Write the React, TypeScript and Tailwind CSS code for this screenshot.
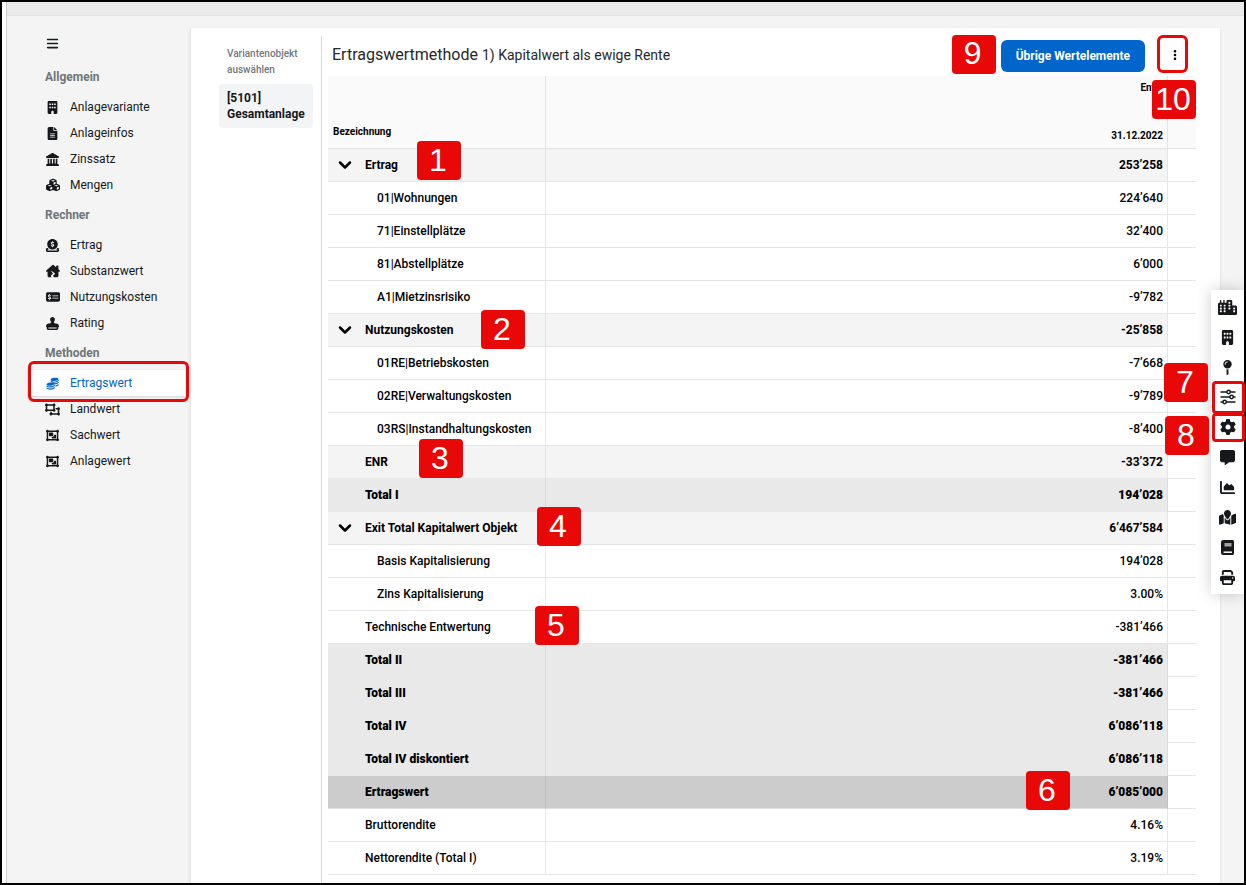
import { FaBars, FaBuilding, FaChartArea, FaCircleDollarToSlot, FaCity, FaCubes, FaEllipsisVertical, FaFileLines, FaGear, FaHouseChimneyCrack, FaLandmark, FaMapLocation, FaMapPin, FaMessage, FaMoneyCheckDollar, FaObjectGroup, FaObjectUngroup, FaPrint, FaStamp } from 'react-icons/fa6'
import { FiChevronDown } from 'react-icons/fi'
import type { ComponentType } from 'react'

type Icon = ComponentType<{ size?: number }>

interface NavItem {
  label: string
  icon: Icon
  size: number
  active?: boolean
}

interface Row {
  label: string
  value: string
  kind: 'group' | 'child' | 'sum' | 'total' | 'result' | 'plain'
  badge?: { text: string; pos: string }
}

function CoinStacksIcon({ size = 14 }: { size?: number }) {
  return (
    <svg width={size} height={size} viewBox="0 0 14 14" fill="none" stroke="currentColor" strokeWidth="1.3" strokeLinecap="round">
      <ellipse cx="9.2" cy="2.6" rx="4.3" ry="1.7" transform="rotate(-8 9.2 2.6)" fill="currentColor" stroke="none" />
      <path d="M5.6 4.9C8 5.9 11.6 5.4 13.2 3.9M8.8 7.4C10.8 7.4 12.4 6.9 13.2 6.1M10.6 9.6C11.8 9.4 12.7 9 13.2 8.4" />
      <ellipse cx="4.9" cy="7.7" rx="4.3" ry="1.7" transform="rotate(-8 4.9 7.7)" fill="currentColor" stroke="none" />
      <path d="M1 9.9C3.2 11.2 7.2 10.8 9 9.3M1 12.2C3.2 13.5 7.2 13.1 9 11.6" />
    </svg>
  )
}

function SlidersIcon({ size = 16 }: { size?: number }) {
  return (
    <svg width={size} height={size} viewBox="0 0 16 16" fill="none" stroke="currentColor" strokeWidth="1.4" strokeLinecap="round">
      <path d="M1 3H6.8M10.4 3H15M1 8H9.8M13.4 8H15M1 13H2.8M6.4 13H15" />
      <circle cx="8.6" cy="3" r="1.7" />
      <circle cx="11.6" cy="8" r="1.7" />
      <circle cx="4.6" cy="13" r="1.7" />
    </svg>
  )
}

function BookIcon({ size = 15 }: { size?: number }) {
  return (
    <svg width={size} height={size} viewBox="0 0 15 15">
      <path d="M3.5 0H12.5Q14 0 14 1.5V13.6Q14 15 12.6 15H3.5Q1 15 1 12.5V2.5Q1 0 3.5 0Z" fill="currentColor" />
      <rect x="4.5" y="3" width="7" height="3.5" fill="#a3a3a3" />
      <path d="M3.5 12.2H12" stroke="#ffffff" strokeWidth="1.5" />
    </svg>
  )
}

const sections: { title: string; items: NavItem[] }[] = [
  {
    title: 'Allgemein',
    items: [
      { label: 'Anlagevariante', icon: FaBuilding, size: 13 },
      { label: 'Anlageinfos', icon: FaFileLines, size: 13 },
      { label: 'Zinssatz', icon: FaLandmark, size: 13 },
      { label: 'Mengen', icon: FaCubes, size: 14 },
    ],
  },
  {
    title: 'Rechner',
    items: [
      { label: 'Ertrag', icon: FaCircleDollarToSlot, size: 13 },
      { label: 'Substanzwert', icon: FaHouseChimneyCrack, size: 14 },
      { label: 'Nutzungskosten', icon: FaMoneyCheckDollar, size: 14 },
      { label: 'Rating', icon: FaStamp, size: 13 },
    ],
  },
  {
    title: 'Methoden',
    items: [
      { label: 'Ertragswert', icon: CoinStacksIcon, size: 13, active: true },
      { label: 'Landwert', icon: FaObjectUngroup, size: 15 },
      { label: 'Sachwert', icon: FaObjectGroup, size: 13 },
      { label: 'Anlagewert', icon: FaObjectGroup, size: 13 },
    ],
  },
]

const rows: Row[] = [
  { label: 'Ertrag', value: '253’258', kind: 'group', badge: { text: '1', pos: 'left-[89px] -top-2' } },
  { label: '01|Wohnungen', value: '224’640', kind: 'child' },
  { label: '71|Einstellplätze', value: '32’400', kind: 'child' },
  { label: '81|Abstellplätze', value: '6’000', kind: 'child' },
  { label: 'A1|Mietzinsrisiko', value: '-9’782', kind: 'child' },
  { label: 'Nutzungskosten', value: '-25’858', kind: 'group', badge: { text: '2', pos: 'left-[153px] -top-1' } },
  { label: '01RE|Betriebskosten', value: '-7’668', kind: 'child' },
  { label: '02RE|Verwaltungskosten', value: '-9’789', kind: 'child' },
  { label: '03RS|Instandhaltungskosten', value: '-8’400', kind: 'child' },
  { label: 'ENR', value: '-33’372', kind: 'sum', badge: { text: '3', pos: 'left-[91px] -top-[7px]' } },
  { label: 'Total I', value: '194’028', kind: 'total' },
  { label: 'Exit Total Kapitalwert Objekt', value: '6’467’584', kind: 'group', badge: { text: '4', pos: 'left-[209px] -top-[5px]' } },
  { label: 'Basis Kapitalisierung', value: '194’028', kind: 'child' },
  { label: 'Zins Kapitalisierung', value: '3.00%', kind: 'child' },
  { label: 'Technische Entwertung', value: '-381’466', kind: 'plain', badge: { text: '5', pos: 'left-[207px] -top-[5px]' } },
  { label: 'Total II', value: '-381’466', kind: 'total' },
  { label: 'Total III', value: '-381’466', kind: 'total' },
  { label: 'Total IV', value: '6’086’118', kind: 'total' },
  { label: 'Total IV diskontiert', value: '6’086’118', kind: 'total' },
  { label: 'Ertragswert', value: '6’085’000', kind: 'result', badge: { text: '6', pos: 'right-[97px] -top-[5px]' } },
  { label: 'Bruttorendite', value: '4.16%', kind: 'plain' },
  { label: 'Nettorendite (Total I)', value: '3.19%', kind: 'plain' },
]

const rowStyle: Record<Row['kind'], string> = {
  group: 'bg-[#f4f4f4] border-r-[#e4e4e4] border-b-[#e6e6e6] font-bold',
  child: 'border-r-[#e8e8e8] border-b-[#e6e6e6] font-medium',
  sum: 'bg-[#f4f4f4] border-r-[#e4e4e4] border-b-[#e9e9e9] font-bold',
  total: 'bg-[#e9e9e9] border-r-[#dadada] border-b-[#e9e9e9] font-black',
  result: 'bg-[#cccccc] border-r-[#c0c0c0] border-b-[#dedede] font-black',
  plain: 'border-r-[#e8e8e8] border-b-[#e6e6e6] font-medium',
}

const tools: { label: string; icon: Icon; size: number; mark?: string; badge?: { text: string; pos: string } }[] = [
  { label: 'Areal', icon: FaCity, size: 19 },
  { label: 'Gebäude', icon: FaBuilding, size: 15 },
  { label: 'Standort', icon: FaMapPin, size: 15 },
  { label: 'Filter', icon: SlidersIcon, size: 16, mark: '-top-px -bottom-0.5', badge: { text: '7', pos: 'right-[36px] -top-[19px]' } },
  { label: 'Einstellungen', icon: FaGear, size: 16, mark: 'top-px bottom-0', badge: { text: '8', pos: 'right-[35px] top-1' } },
  { label: 'Kommentare', icon: FaMessage, size: 15 },
  { label: 'Diagramm', icon: FaChartArea, size: 15 },
  { label: 'Karte', icon: FaMapLocation, size: 17 },
  { label: 'Handbuch', icon: BookIcon, size: 15 },
  { label: 'Drucken', icon: FaPrint, size: 15 },
]

function Badge({ text, pos }: { text: string; pos: string }) {
  return (
    <span
      className={`${pos} z-20 flex h-[39px] w-11 items-center justify-center rounded bg-[#e90808] pr-0.5 pb-0.5 font-['Liberation_Sans',sans-serif] text-[32px] leading-none font-normal text-white`}
    >
      {text}
    </span>
  )
}

function Sidebar() {
  return (
    <aside className="w-[183px] shrink-0 pr-px pl-[21px]">
      <button aria-label="Menü" className="mt-[15px] ml-[18px] flex h-6 w-4 items-center">
        <FaBars size={13} />
      </button>
      <nav className="mt-[5px]">
        {sections.map((section) => (
          <div key={section.title}>
            <h2 className="flex h-[34px] items-center pl-[17px] font-bold text-[#6f747a]">{section.title}</h2>
            {section.items.map(({ label, icon: Icon, size, active }) => (
              <a
                key={label}
                href="#"
                className={`relative flex h-[26px] items-center gap-2.5 pl-[17px] ${active ? 'bg-white text-[#0066cc] shadow-sm' : ''}`}
              >
                <span className="flex w-[15px] justify-center">
                  <Icon size={size} />
                </span>
                {label}
                {active && <span className="absolute inset-x-0 -top-[9px] -bottom-1.5 rounded-md border-3 border-[#e90808]" />}
              </a>
            ))}
          </div>
        ))}
      </nav>
    </aside>
  )
}

function ValueTable() {
  return (
    <table className="w-full table-fixed border-separate border-spacing-0">
      <colgroup>
        <col className="w-[218px]" />
        <col />
        <col className="w-[28px]" />
      </colgroup>
      <thead>
        <tr className="h-[73px] bg-[#fafafa] text-[10px] leading-4 font-black">
          <th className="border-r border-b border-[#e4e4e4] px-[5px] pb-2 text-left align-bottom">Bezeichnung</th>
          <th className="border-r border-b border-[#e4e4e4] px-1 pt-1 pb-1 text-right align-top">
            <div className="flex h-16 flex-col justify-between">
              <span className="pr-2">Ent</span>
              <span>31.12.2022</span>
            </div>
          </th>
          <th className="relative border-b border-[#e4e4e4]">
            <Badge text="10" pos="absolute right-0 top-1" />
          </th>
        </tr>
      </thead>
      <tbody>
        {rows.map(({ label, value, kind, badge }) => (
          <tr key={label} className="h-[33px]">
            <td className={`relative border-r border-b whitespace-nowrap ${rowStyle[kind]} ${kind === 'child' ? 'pl-[49px]' : kind === 'group' ? 'pl-[7px]' : 'pl-[37px]'}`}>
              {kind === 'group' ? (
                <button className="flex items-center gap-2.5" aria-expanded="true">
                  <FiChevronDown size={20} strokeWidth={3} />
                  {label}
                </button>
              ) : (
                label
              )}
              {badge && kind !== 'result' && <Badge text={badge.text} pos={`absolute ${badge.pos}`} />}
            </td>
            <td className={`relative border-r border-b pr-1 text-right ${rowStyle[kind]}`}>
              {value}
              {badge && kind === 'result' && <Badge text={badge.text} pos={`absolute ${badge.pos}`} />}
            </td>
            <td className="border-b border-[#e6e6e6]" />
          </tr>
        ))}
      </tbody>
    </table>
  )
}

function ToolRail() {
  return (
    <div className="absolute top-[288px] right-0 flex w-[33px] flex-col bg-white py-0.5 shadow-[0_0_16px_rgba(0,0,0,0.2)]">
      {tools.map(({ label, icon: Icon, size, mark, badge }) => (
        <div key={label} className="relative">
          <button aria-label={label} className="flex h-[30px] w-full items-center justify-center">
            <Icon size={size} />
          </button>
          {mark && <span className={`pointer-events-none absolute left-px -right-px rounded border-3 border-[#e90808] ${mark}`} />}
          {badge && <Badge text={badge.text} pos={`absolute ${badge.pos}`} />}
        </div>
      ))}
    </div>
  )
}

export default function App() {
  return (
    <div className="relative min-h-screen border-2 border-black bg-white pl-1 font-[Roboto,sans-serif] text-xs text-[#16181b]">
      <div className="flex min-h-[calc(100vh-4px)] flex-col border-l border-[#cfcfcf] bg-[#f4f4f4]">
        <div className="h-3.5 border-b border-[#e2e2e2] bg-[#ebebeb]" />
        <div className="flex grow">
          <Sidebar />
          <main className="mt-3 mr-6 flex min-w-0 grow border-l border-[#e6e6e6] bg-white text-black shadow-sm">
            <div className="mt-2 flex w-[131px] shrink-0 flex-col border-r border-[#d9d9d9] pt-2.5 pr-2 pl-7">
              <p className="pl-2 text-[10px] leading-4 font-medium text-[#73777d]">Variantenobjekt auswählen</p>
              <button className="mt-1.5 rounded bg-[#f3f4f6] px-2 py-1.5 text-left leading-4 font-bold text-[#16181b]">
                [5101] Gesamtanlage
              </button>
            </div>
            <section className="min-w-0 grow pr-6 pb-2 pl-1.5">
              <header className="flex h-12 items-center">
                <h1 className="mt-1.5 grow pl-1 text-base text-[#26282b]">
                  Ertragswertmethode <span className="text-sm">1) Kapitalwert als ewige Rente</span>
                </h1>
                <Badge text="9" pos="mt-1 mr-[5px]" />
                <button className="mt-2 h-8 rounded-md bg-[#0066cc] px-[15px] font-bold text-white">Übrige Wertelemente</button>
                <button
                  aria-label="Mehr"
                  className="mt-1 mr-2 ml-3 flex h-[38px] w-[31px] items-center justify-center rounded-md border-3 border-[#e90808] pt-0.5 pl-1"
                >
                  <FaEllipsisVertical size={12} />
                </button>
              </header>
              <ValueTable />
            </section>
          </main>
        </div>
      </div>
      <ToolRail />
    </div>
  )
}
